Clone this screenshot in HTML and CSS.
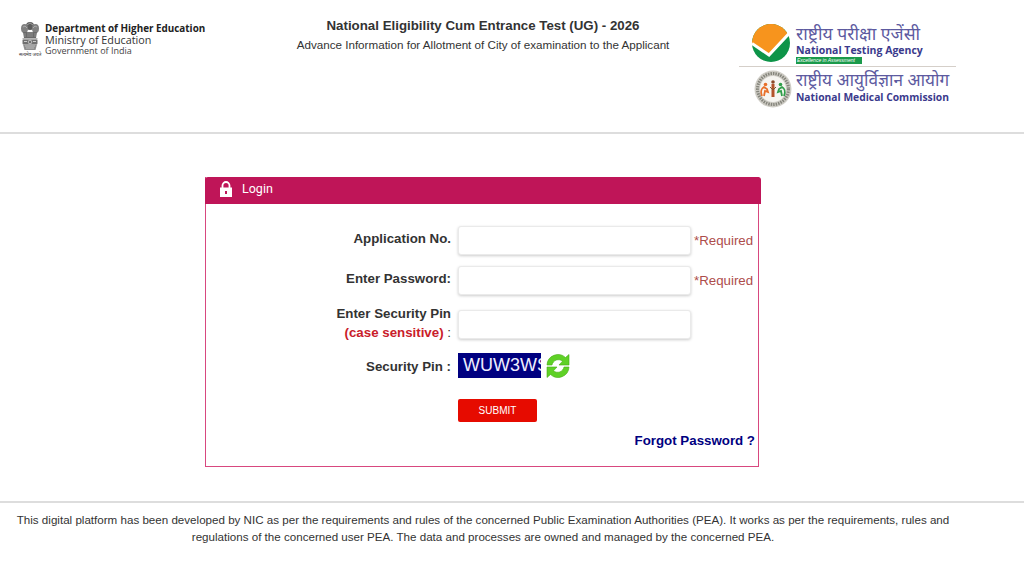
FILE: index.html
```html
<!DOCTYPE html>
<html lang="en">
<head>
  <meta charset="UTF-8">
  <meta name="viewport" content="width=device-width, initial-scale=1.0">
  <title>NEET (UG) 2026 - Login</title>
  <link rel="stylesheet" href="styles.css">
</head>
<body>
  <!-- Top header with ministry, title and agency logos -->
  <header class="site-header">
    <div class="ministry">
      <div class="emblem">
        <svg width="18" height="29" viewBox="0 0 18 29">
          <ellipse cx="9" cy="4" rx="4" ry="4" fill="#5c5c5c"/>
          <ellipse cx="3.500" cy="6.500" rx="3.500" ry="4.500" fill="#808080"/>
          <ellipse cx="14.500" cy="6.500" rx="3.500" ry="4.500" fill="#808080"/>
          <path d="M6 3l3-2 3 2M2 5l2-1 2 2M12 6l2-2 2 1" fill="none" stroke="#bbb" stroke-width=".7"/>
          <path d="M2 10h14l-1 6H3z" fill="#6a6a6a"/>
          <path d="M4 11v4M7 10v5M9 10v5M11 10v5M14 11v4" stroke="#aaa" stroke-width=".6"/>
          <rect x="1.500" y="16" width="15" height="1.500" fill="#b5b5b5"/>
          <rect x="1.500" y="17.500" width="15" height="5" rx="1" fill="#707070"/>
          <circle cx="9" cy="20" r="1.800" fill="none" stroke="#ddd" stroke-width=".7"/>
          <path d="M3 19.500h3M12 19.500h3" stroke="#ccc" stroke-width="1"/>
          <path d="M2 22.500h14l-1.500 5.500h-11z" fill="#8f8f8f"/>
          <path d="M4 24h10M5 26h8" stroke="#d0d0d0" stroke-width=".7"/>
        </svg>
        <div class="motto">सत्यमेव जयते</div>
      </div>
      <div class="ministry-text">
        <div class="dept">Department of Higher Education</div>
        <div class="min">Ministry of Education</div>
        <div class="gov">Government of India</div>
      </div>
    </div>
    <div class="title-block">
      <h1>National Eligibility Cum Entrance Test (UG) - 2026</h1>
      <p>Advance Information for Allotment of City of examination to the Applicant</p>
    </div>
    <div class="logos">
      <div class="logo-row nta">
        <svg width="38" height="38" viewBox="0 0 38 38">
          <circle cx="19" cy="19" r="19" fill="#0d9448"/>
          <path d="M0 20A19 19 0 0 1 36 10.500L17 31z" fill="#f7941d"/>
          <path d="M0 19.500L17 31 37 9.500" fill="none" stroke="#fff" stroke-width="3"/>
        </svg>
        <div class="logo-text">
          <div class="hindi hindi-nta">राष्ट्रीय परीक्षा एजेंसी</div>
          <div class="eng">National Testing Agency</div>
          <div class="tag">Excellence in Assessment</div>
        </div>
      </div>
      <div class="logo-row nmc">
        <svg width="38" height="38" viewBox="0 0 38 38">
          <circle cx="19" cy="19" r="18.500" fill="#cfcdc6"/>
          <circle cx="19" cy="19" r="15.500" fill="none" stroke="#85857c" stroke-width="3" stroke-dasharray="1.500 1"/>
          <circle cx="19" cy="19" r="13" fill="#f6f5f1"/>
          <circle cx="11.500" cy="14.500" r="1.800" fill="#e8702a"/>
          <path d="M8 26c-2-5 0-8 2-9l3 2 1 3-3-1-1 5" fill="none" stroke="#e8702a" stroke-width="1.800"/>
          <circle cx="19" cy="12" r="1.800" fill="#8a4a2a"/>
          <path d="M19 14v13" stroke="#b3532a" stroke-width="3"/>
          <path d="M16 17l3 3 3-3" fill="none" stroke="#7a5a30" stroke-width="1"/>
          <circle cx="26.500" cy="14.500" r="1.800" fill="#2f9e4a"/>
          <path d="M30 26c2-5 0-8-2-9l-3 2-1 3 3-1 1 5" fill="none" stroke="#2f9e4a" stroke-width="1.800"/>
        </svg>
        <div class="logo-text">
          <div class="hindi">राष्ट्रीय आयुर्विज्ञान आयोग</div>
          <div class="eng eng-nmc">National Medical Commission</div>
        </div>
      </div>
    </div>
  </header>

  <!-- Login box -->
  <main class="content">
    <section class="login-panel">
      <div class="panel-heading">
        <svg class="lock" width="12" height="16" viewBox="0 0 12 16">
          <path d="M2.500 7V4.500a3.500 3.500 0 0 1 7 0V7" fill="none" stroke="#fff" stroke-width="1.800"/>
          <path d="M0 6.500h12V16H0zM5 10v3h2v-3z" fill="#fff" fill-rule="evenodd"/>
        </svg>
        <span>Login</span>
      </div>
      <form class="login-form">
        <div class="form-row row-app">
          <label class="field-label">Application No.</label>
          <input class="field-input" type="text">
          <span class="required">*Required</span>
        </div>
        <div class="form-row row-pass">
          <label class="field-label">Enter Password:</label>
          <input class="field-input" type="password">
          <span class="required">*Required</span>
        </div>
        <div class="form-row row-pin">
          <label class="field-label">Enter Security Pin<br><span class="case">(case sensitive)</span> <span class="colon">:</span></label>
          <input class="field-input" type="text">
        </div>
        <div class="form-row row-captcha">
          <label class="field-label">Security Pin :</label>
          <div class="captcha">WUW3WS</div>
          <svg class="refresh" width="26" height="26" viewBox="0 0 26 26">
            <path d="M2 12A11 11 0 0 1 20.500 4.500L24 1.500v10.500h-10l3.500-3.800A6.500 6.500 0 0 0 7 12z" fill="#5fd126" stroke="#48ad16" stroke-width=".6"/>
            <path d="M24 14A11 11 0 0 1 5.500 21.500L2 24.500V14h10l-3.500 3.800A6.500 6.500 0 0 0 19 14z" fill="#5fd126" stroke="#48ad16" stroke-width=".6"/>
          </svg>
        </div>
        <div class="form-row row-submit">
          <span class="field-label"></span>
          <button class="submit-btn" type="button">SUBMIT</button>
        </div>
        <div class="forgot"><a href="#">Forgot Password ?</a></div>
      </form>
    </section>
  </main>

  <footer class="site-footer">
    <p>This digital platform has been developed by NIC as per the requirements and rules of the concerned Public Examination Authorities (PEA). It works as per the requirements, rules and regulations of the concerned user PEA. The data and processes are owned and managed by the concerned PEA.</p>
  </footer>
</body>
</html>
```

FILE: styles.css
```css
* {
  box-sizing: border-box;
}
body {
  margin: 0;
  background-color: #fff;
  color: #333;
  font-family: "Liberation Sans", Arial, sans-serif;
  font-size: 13.3px;
}
.site-header {
  height: 134px;
  border-bottom: 2px solid #ddd;
  display: flex;
  align-items: flex-start;
}
.ministry {
  width: 290px;
  padding: 22px 0 0 19px;
  display: flex;
}
.emblem {
  width: 26px;
  flex-shrink: 0;
  line-height: 0;
}
.emblem svg {
  margin-left: 2px;
}
.motto {
  width: 22px;
  font-family: "Noto Sans", sans-serif;
  font-size: 4.6px;
  line-height: 6px;
  color: #333;
  text-align: center;
  white-space: nowrap;
}
.ministry-text {
  font-family: "Open Sans", sans-serif;
  color: #333;
}
.dept {
  font-size: 9.9px;
  font-weight: 700;
  line-height: 12px;
  color: #222;
}
.min {
  font-size: 10.8px;
  line-height: 12px;
}
.gov {
  font-size: 9px;
  line-height: 10px;
  color: #444;
}
.title-block {
  width: 386px;
  padding-top: 17px;
  text-align: center;
}
.title-block h1 {
  margin: 0;
  font-size: 13.3px;
  line-height: 18px;
  font-weight: 700;
  color: #333;
}
.title-block p {
  margin: 2px 0 0;
  font-size: 11.65px;
  line-height: 16px;
  color: #333;
}
.logos {
  width: 217px;
  margin-left: 63px;
  padding-top: 24px;
}
.logo-row {
  display: flex;
  align-items: flex-start;
}
.nta {
  padding-left: 13px;
  height: 43px;
  border-bottom: 1px solid #d5cfc9;
}
.nmc {
  padding: 3px 0 0 15px;
}
.nta .logo-text {
  margin-left: 6px;
}
.logo-text {
  margin-left: 4px;
  color: #3b3a8c;
}
.hindi {
  font-family: "Noto Sans", "DejaVu Sans", sans-serif;
  font-size: 17.2px;
  line-height: 19px;
  color: #5d5aa0;
  white-space: nowrap;
}
.hindi-nta {
  font-size: 17.6px;
}
.eng {
  font-family: "Open Sans", sans-serif;
  font-size: 10.5px;
  line-height: 14px;
  font-weight: 700;
  white-space: nowrap;
}
.eng-nmc {
  font-size: 10.3px;
  margin-top: 1px;
}
.tag {
  width: 66px;
  height: 7px;
  background-color: #1b9a4b;
  color: #fff;
  font-size: 5px;
  line-height: 7px;
  font-style: italic;
  padding-left: 1px;
  white-space: nowrap;
  overflow: hidden;
}
.content {
  padding-top: 43px;
  height: 367px;
}
.login-panel {
  width: 554px;
  height: 290px;
  margin-left: 205px;
  border: 1px solid #d8487f;
  border-top: none;
}
.panel-heading {
  height: 27px;
  margin: 0 -3px 0 -1px;
  padding: 0 0 3px 15px;
  background-color: #bf1558;
  border-radius: 3px 3px 0 0;
  color: #fff;
  font-family: Roboto, sans-serif;
  font-size: 12.5px;
  display: flex;
  align-items: center;
  gap: 10px;
}
.panel-heading span {
  margin-bottom: 1px;
}
.login-form {
  padding-top: 22px;
}
.form-row {
  display: flex;
  align-items: flex-start;
}
.field-label {
  width: 245px;
  margin-right: 7px;
  text-align: right;
  font-weight: 700;
  font-size: 13.3px;
  line-height: 20px;
  color: #333;
  flex-shrink: 0;
}
.field-input {
  width: 233px;
  height: 29px;
  background: #fff;
  border: 1px solid #eaeaea;
  border-radius: 3px;
  box-shadow: 0 1px 3px rgba(0, 0, 0, .2);
}
.required {
  margin-left: 3px;
  padding-top: 5px;
  color: #ad4d4b;
  line-height: 20px;
}
.row-app {
  height: 40px;
}
.row-app .field-label {
  padding-top: 3px;
}
.row-pass {
  height: 43px;
}
.row-pass .field-label {
  padding-top: 3px;
}
.row-pin {
  height: 44px;
}
.row-pin .field-label {
  margin-top: -5px;
  line-height: 19px;
}
.row-pin .field-input {
  margin-top: 1px;
}
.row-captcha {
  height: 46px;
}
.row-captcha .field-label {
  padding-top: 4px;
}
.case {
  color: #c9202a;
}
.colon {
  font-weight: 400;
}
.captcha {
  width: 83px;
  height: 25px;
  padding-left: 5px;
  background-color: #000080;
  color: #eef;
  font-size: 18px;
  line-height: 25px;
  white-space: nowrap;
  overflow: hidden;
}
.refresh {
  margin-left: 4px;
}
.submit-btn {
  width: 79px;
  height: 23px;
  border: none;
  border-radius: 2px;
  background-color: #e60b00;
  color: #fff;
  font-family: "Liberation Sans", Arial, sans-serif;
  font-size: 10px;
  font-weight: 400;
  padding: 0;
}
.forgot {
  margin-top: 11px;
  padding-right: 3px;
  text-align: right;
  line-height: 16px;
}
.forgot a {
  color: #000080;
  font-weight: 700;
  font-size: 13.3px;
  text-decoration: none;
}
.site-footer {
  border-top: 2px solid #ddd;
  padding: 8px 58px 0 0;
  text-align: center;
  font-size: 11.6px;
  line-height: 17px;
  color: #333;
}
.site-footer p {
  margin: 0;
}
```
